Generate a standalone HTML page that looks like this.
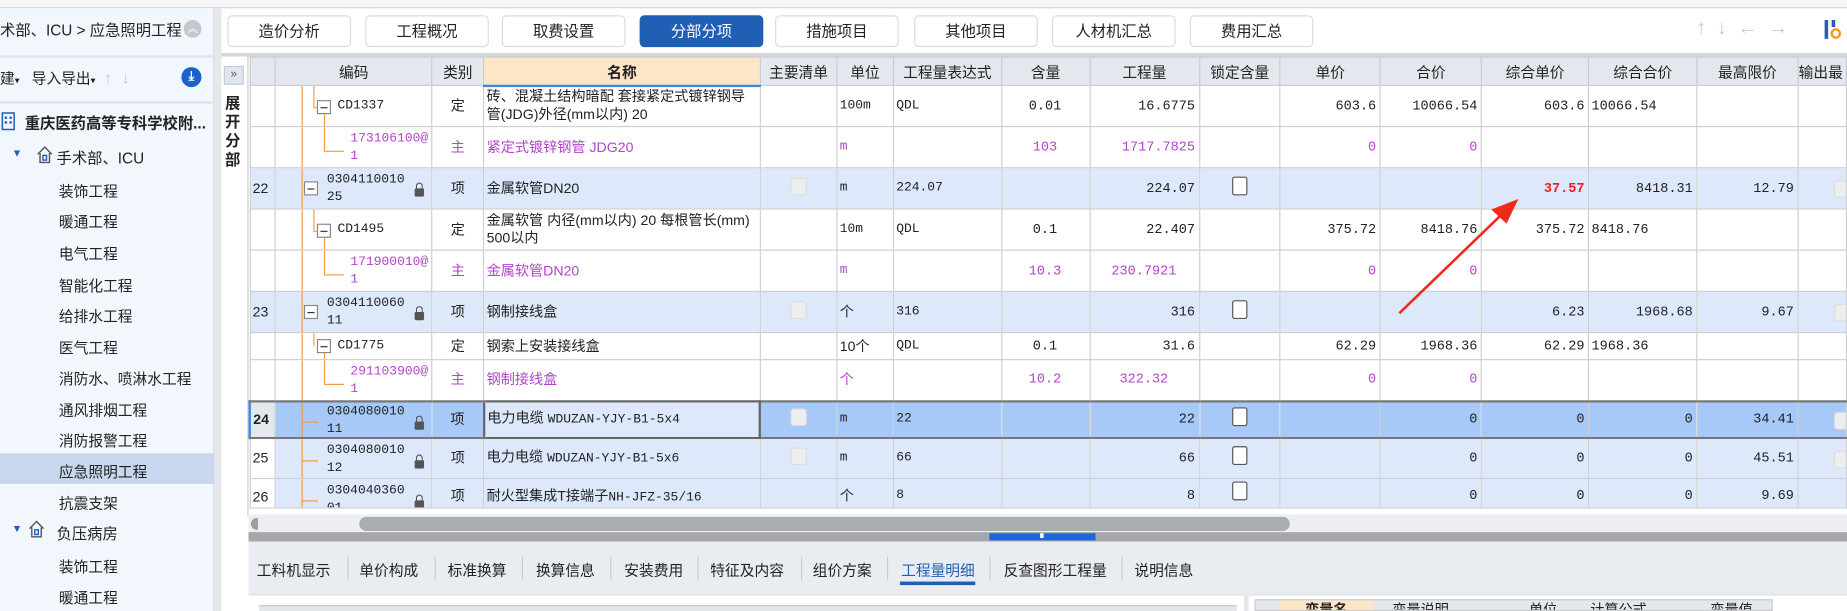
<!DOCTYPE html>
<html><head><meta charset="utf-8"><style>
*{box-sizing:border-box;margin:0;padding:0}
html,body{width:1847px;height:611px;overflow:hidden;background:#fff}
#w{position:absolute;left:0;top:0;width:1568px;height:519px;transform:scale(1.17793,1.17726);transform-origin:0 0;font-family:"Liberation Sans","Noto Sans CJK SC",sans-serif;font-size:12.5px;color:#222;background:#fff}
.a{position:absolute}
.btn{position:absolute;top:13px;height:27px;width:105px;border:1px solid #dcdcdc;border-radius:4px;background:#fff;text-align:center;line-height:25px;font-size:13px;color:#222}
.lt{position:absolute;left:50px;font-size:12.5px;color:#222}
table{border-collapse:collapse;table-layout:fixed;position:absolute;left:211px;top:48px}
td{border:1px solid #cfcfcf;height:35px;position:relative;font-size:12px;padding:0 2px;line-height:15px;overflow:hidden;white-space:nowrap;vertical-align:middle}
.s td{height:23px}
.t td{height:25px}
th{border:1px solid #c8ccd2;background:#e3e8ef;height:24px;font-weight:normal;font-size:12.5px}
.n{font-family:"Liberation Mono","Noto Sans CJK SC",monospace;font-size:11.5px;text-align:right;padding-right:3px}
.m{font-family:"Liberation Mono","Noto Sans CJK SC",monospace;font-size:11px}
.c{text-align:center}
.p{color:#b245c8}
.b{background:#dde9fb}
.sel td{background:#a6c9f7;border-top:2px solid #777;border-bottom:2px solid #777;height:31px}
.ol{position:absolute;background:#f39a3c}
.bx{position:absolute;width:12px;height:12px;border:1px solid #888;background:#fff}
.bx:after{content:"";position:absolute;left:2px;top:5px;width:6px;height:1px;background:#333}
.lk{position:absolute;width:8px;height:7px;background:#555;border-radius:1px}
.lk:before{content:"";position:absolute;left:1px;top:-5px;width:4px;height:5px;border:1px solid #555;border-bottom:none;border-radius:3px 3px 0 0}
.ck{display:inline-block;width:14px;height:15px;border:1px solid #ddd;border-radius:3px;background:#eee}
.cw{display:inline-block;width:13px;height:16px;border:1px solid #555;border-radius:2px;background:#fff}
.bt{position:absolute;top:474px;font-size:12.5px;color:#222}
.sp{position:absolute;top:473px;width:1px;height:20px;background:#ccc}
</style></head><body><div id="w">
<div class="a" style="left:0;top:0;width:1568px;height:7px;background:#f7f7f7;border-bottom:1px solid #d8d8d8"></div>
<div class="a" style="left:0;top:7px;width:182px;height:512px;background:#f2f7fd;border-right:1px solid #d6dbe2"></div>
<div class="a" style="left:0;top:15px;font-size:13px">术部、ICU &gt; 应急照明工程</div>
<div class="a" style="left:156px;top:17px;width:15px;height:15px;border-radius:50%;background:#c4c7cc;color:#fff;font-size:9px;text-align:center;line-height:15px">︽</div>
<div class="a" style="left:0;top:47px;width:182px;height:2px;background:#dfe3e8"></div>
<div class="a" style="left:0;top:56px;font-size:12.5px">建<span style="font-size:8px">▾</span> &nbsp;&nbsp;导入导出<span style="font-size:8px">▾</span> <span style="color:#c9c9c9;font-size:14px">&nbsp;↑ &nbsp;↓</span></div>
<div class="a" style="left:154px;top:57px;width:17px;height:17px;border-radius:50%;background:#1a63c8;color:#fff;font-size:11px;text-align:center;line-height:16px;font-weight:bold">⤓</div>
<div class="a" style="left:0;top:86px;width:182px;height:2px;background:#dfe3e8"></div>
<svg class="a" style="left:0;top:95px" width="14" height="16" viewBox="0 0 14 16"><rect x="2" y="1" width="10" height="14" fill="none" stroke="#1f5fb5" stroke-width="1.3"/><rect x="4" y="4" width="2" height="2" fill="#1f5fb5"/><rect x="8" y="4" width="2" height="2" fill="#1f5fb5"/><rect x="4" y="8" width="2" height="2" fill="#1f5fb5"/><rect x="8" y="8" width="2" height="2" fill="#1f5fb5"/></svg>
<div class="a" style="left:21px;top:94px;font-weight:bold;font-size:13px">重庆医药高等专科学校附...</div>
<div class="a" style="left:10px;top:125px;color:#1f5fb5;font-size:9px">▼</div>
<svg class="a" style="left:31px;top:124px" width="14" height="15" viewBox="0 0 14 15"><path d="M1 7 L7 1 L13 7 M3 6 V14 H11 V6" fill="none" stroke="#555" stroke-width="1.2"/><rect x="5.5" y="8" width="3" height="4" fill="none" stroke="#1f5fb5" stroke-width="1.2"/></svg>
<div class="a" style="left:48px;top:124px;font-size:13px">手术部、ICU</div>
<div class="lt" style="top:152px">装饰工程</div>
<div class="lt" style="top:178px">暖通工程</div>
<div class="lt" style="top:205px">电气工程</div>
<div class="lt" style="top:232px">智能化工程</div>
<div class="lt" style="top:258px">给排水工程</div>
<div class="lt" style="top:285px">医气工程</div>
<div class="lt" style="top:311px">消防水、喷淋水工程</div>
<div class="lt" style="top:338px">通风排烟工程</div>
<div class="lt" style="top:364px">消防报警工程</div>
<div class="a" style="left:0;top:385px;width:182px;height:26px;background:#c8d6ee"></div>
<div class="lt" style="top:390px">应急照明工程</div>
<div class="lt" style="top:417px">抗震支架</div>
<div class="a" style="left:10px;top:444px;color:#1f5fb5;font-size:9px">▼</div>
<svg class="a" style="left:24px;top:442px" width="14" height="15" viewBox="0 0 14 15"><path d="M1 7 L7 1 L13 7 M3 6 V14 H11 V6" fill="none" stroke="#555" stroke-width="1.2"/><rect x="5.5" y="8" width="3" height="4" fill="none" stroke="#1f5fb5" stroke-width="1.2"/></svg>
<div class="a" style="left:48px;top:443px;font-size:13px">负压病房</div>
<div class="lt" style="top:471px">装饰工程</div>
<div class="lt" style="top:497px">暖通工程</div>
<div class="a" style="left:182px;top:7px;width:6px;height:512px;background:#e6e8eb"></div>
<div class="a" style="left:188px;top:45px;width:1380px;height:3px;background:#d4d7dc"></div>
<div class="btn" style="left:193px">造价分析</div>
<div class="btn" style="left:310px">工程概况</div>
<div class="btn" style="left:426px">取费设置</div>
<div class="btn" style="left:543px;background:#1f5fb5;border-color:#1f5fb5;color:#fff">分部分项</div>
<div class="btn" style="left:658px">措施项目</div>
<div class="btn" style="left:776px">其他项目</div>
<div class="btn" style="left:893px">人材机汇总</div>
<div class="btn" style="left:1010px">费用汇总</div>
<div class="a" style="left:1440px;top:14px;color:#c6c9ce;font-size:17px;letter-spacing:9px">↑↓←→</div>
<div class="a" style="left:1549px;top:17px;width:3px;height:16px;background:#1f5fb5"></div>
<div class="a" style="left:1555px;top:17px;width:3px;height:6px;background:#1f5fb5"></div>
<div class="a" style="left:1554px;top:24px;width:9px;height:9px;border:2px solid #f39a1e;border-radius:50%"></div>
<div class="a" style="left:188px;top:48px;width:23px;height:390px;background:#fff;border-right:1px solid #ccc"></div>
<div class="a" style="left:190px;top:56px;width:17px;height:16px;background:#dfe6ee;border:1px solid #c3ccd6;font-size:10px;color:#555;text-align:center;line-height:14px">»</div>
<div class="a" style="left:191px;top:80px;width:15px;font-weight:bold;font-size:13px;line-height:16px">展开分部</div>
<table>
<colgroup><col style="width:22px"><col style="width:133px"><col style="width:44px"><col style="width:235px"><col style="width:65px"><col style="width:48px"><col style="width:92px"><col style="width:75px"><col style="width:93px"><col style="width:69px"><col style="width:85px"><col style="width:86px"><col style="width:91px"><col style="width:92px"><col style="width:86px"><col style="width:41px"></colgroup>
<tr><th></th><th>编码</th><th>类别</th><th style="background:#fde6c6;border-bottom:2px solid #3a86e0;font-weight:bold">名称</th><th>主要清单</th><th>单位</th><th>工程量表达式</th><th>含量</th><th>工程量</th><th>锁定含量</th><th>单价</th><th>合价</th><th>综合单价</th><th>综合合价</th><th>最高限价</th><th style="text-align:left">输出最</th></tr>
<tr><td></td><td><div class="ol" style="left:22px;top:0;width:1px;height:36px"></div><div class="ol" style="left:32px;top:0;width:1px;height:18px"></div><div class="ol" style="left:32px;top:18px;width:4px;height:1px"></div><div class="bx" style="left:35px;top:12px"></div><div class="ol" style="left:41px;top:24px;width:1px;height:12px"></div><span class="m" style="position:absolute;left:52px;top:10px">CD1337</span></td><td class="c">定</td><td style="white-space:normal;line-height:15px">砖、混凝土结构暗配 套接紧定式镀锌钢导管(JDG)外径(mm以内) 20</td><td></td><td class="m">100m</td><td class="m">QDL</td><td class="n" style="text-align:center">0.01</td><td class="n">16.6775</td><td></td><td class="n">603.6</td><td class="n">10066.54</td><td class="n">603.6</td><td class="n" style="text-align:left">10066.54</td><td></td><td></td></tr>
<tr><td></td><td><div class="ol" style="left:22px;top:0;width:1px;height:35px"></div><div class="ol" style="left:41px;top:0;width:1px;height:20px"></div><div class="ol" style="left:41px;top:20px;width:17px;height:1px"></div><span class="m p" style="position:absolute;left:63px;top:3px;line-height:15px">173106100@<br>1</span></td><td class="c p">主</td><td class="p">紧定式镀锌钢管 JDG20</td><td></td><td class="m p">m</td><td></td><td class="n p" style="text-align:center">103</td><td class="n p">1717.7825</td><td></td><td class="n p">0</td><td class="n p">0</td><td></td><td></td><td></td><td></td></tr>
<tr class="b"><td class="b">22</td><td class="b"><div class="ol" style="left:22px;top:0;width:1px;height:35px"></div><div class="bx" style="left:24px;top:11px"></div><span class="m" style="position:absolute;left:43px;top:3px">0304110010<br>25</span><div class="lk" style="left:118px;top:17px"></div></td><td class="c b">项</td><td class="b">金属软管DN20</td><td class="b c"><span class="ck"></span></td><td class="b m">m</td><td class="b m">224.07</td><td class="b"></td><td class="b n">224.07</td><td class="b c"><span class="cw"></span></td><td class="b"></td><td class="b"></td><td class="b n" style="color:#f01c1c;font-weight:bold">37.57</td><td class="b n">8418.31</td><td class="b n">12.79</td><td class="b"><span class="ck" style="position:absolute;right:-4px;top:10px"></span></td></tr>
<tr><td></td><td><div class="ol" style="left:22px;top:0;width:1px;height:36px"></div><div class="ol" style="left:32px;top:0;width:1px;height:18px"></div><div class="ol" style="left:32px;top:18px;width:4px;height:1px"></div><div class="bx" style="left:35px;top:12px"></div><div class="ol" style="left:41px;top:24px;width:1px;height:12px"></div><span class="m" style="position:absolute;left:52px;top:10px">CD1495</span></td><td class="c">定</td><td style="white-space:normal">金属软管 内径(mm以内) 20 每根管长(mm) 500以内</td><td></td><td class="m">10m</td><td class="m">QDL</td><td class="n" style="text-align:center">0.1</td><td class="n">22.407</td><td></td><td class="n">375.72</td><td class="n">8418.76</td><td class="n">375.72</td><td class="n" style="text-align:left">8418.76</td><td></td><td></td></tr>
<tr><td></td><td><div class="ol" style="left:22px;top:0;width:1px;height:36px"></div><div class="ol" style="left:41px;top:0;width:1px;height:20px"></div><div class="ol" style="left:41px;top:20px;width:17px;height:1px"></div><span class="m p" style="position:absolute;left:63px;top:3px">171900010@<br>1</span></td><td class="c p">主</td><td class="p">金属软管DN20</td><td></td><td class="m p">m</td><td></td><td class="n p" style="text-align:center">10.3</td><td class="n p" style="text-align:center">230.7921</td><td></td><td class="n p">0</td><td class="n p">0</td><td></td><td></td><td></td><td></td></tr>
<tr class="b"><td class="b">23</td><td class="b"><div class="ol" style="left:22px;top:0;width:1px;height:36px"></div><div class="bx" style="left:24px;top:11px"></div><span class="m" style="position:absolute;left:43px;top:3px">0304110060<br>11</span><div class="lk" style="left:118px;top:17px"></div></td><td class="c b">项</td><td class="b">钢制接线盒</td><td class="b c"><span class="ck"></span></td><td class="b">个</td><td class="b m">316</td><td class="b"></td><td class="b n">316</td><td class="b c"><span class="cw"></span></td><td class="b"></td><td class="b"></td><td class="b n">6.23</td><td class="b n">1968.68</td><td class="b n">9.67</td><td class="b"><span class="ck" style="position:absolute;right:-4px;top:10px"></span></td></tr>
<tr class="s"><td></td><td><div class="ol" style="left:22px;top:0;width:1px;height:23px"></div><div class="ol" style="left:32px;top:0;width:1px;height:11px"></div><div class="bx" style="left:35px;top:5px"></div><div class="ol" style="left:41px;top:17px;width:1px;height:6px"></div><span class="m" style="position:absolute;left:52px;top:4px">CD1775</span></td><td class="c">定</td><td>钢索上安装接线盒</td><td></td><td>10个</td><td class="m">QDL</td><td class="n" style="text-align:center">0.1</td><td class="n">31.6</td><td></td><td class="n">62.29</td><td class="n">1968.36</td><td class="n">62.29</td><td class="n" style="text-align:left">1968.36</td><td></td><td></td></tr>
<tr><td></td><td><div class="ol" style="left:22px;top:0;width:1px;height:36px"></div><div class="ol" style="left:41px;top:0;width:1px;height:20px"></div><div class="ol" style="left:41px;top:20px;width:17px;height:1px"></div><span class="m p" style="position:absolute;left:63px;top:3px">291103900@<br>1</span></td><td class="c p">主</td><td class="p">钢制接线盒</td><td></td><td class="p">个</td><td></td><td class="n p" style="text-align:center">10.2</td><td class="n p" style="text-align:center">322.32</td><td></td><td class="n p">0</td><td class="n p">0</td><td></td><td></td><td></td><td></td></tr>
<tr class="sel"><td style="background:#e3e8ef;font-weight:bold;border-left:2px solid #3a86e0">24</td><td><div class="ol" style="left:22px;top:0;width:1px;height:33px"></div><div class="ol" style="left:22px;top:16px;width:14px;height:1px"></div><span class="m" style="position:absolute;left:43px;top:1px">0304080010<br>11</span><div class="lk" style="left:118px;top:16px"></div></td><td class="c">项</td><td style="background:#dde9fb;border:2px solid #666">电力电缆 <span class="m">WDUZAN-YJY-B1-5x4</span></td><td class="c"><span class="ck"></span></td><td class="m">m</td><td class="m">22</td><td></td><td class="n">22</td><td class="c"><span class="cw"></span></td><td></td><td class="n">0</td><td class="n">0</td><td class="n">0</td><td class="n">34.41</td><td><span class="ck" style="position:absolute;right:-4px;top:8px"></span></td></tr>
<tr class="b"><td style="background:#fff">25</td><td class="b"><div class="ol" style="left:22px;top:0;width:1px;height:35px"></div><div class="ol" style="left:22px;top:18px;width:14px;height:1px"></div><span class="m" style="position:absolute;left:43px;top:3px">0304080010<br>12</span><div class="lk" style="left:118px;top:18px"></div></td><td class="c b">项</td><td class="b">电力电缆 <span class="m">WDUZAN-YJY-B1-5x6</span></td><td class="b c"><span class="ck"></span></td><td class="b m">m</td><td class="b m">66</td><td class="b"></td><td class="b n">66</td><td class="b c"><span class="cw"></span></td><td class="b"></td><td class="b n">0</td><td class="b n">0</td><td class="b n">0</td><td class="b n">45.51</td><td class="b"><span class="ck" style="position:absolute;right:-4px;top:10px"></span></td></tr>
<tr class="b t"><td style="background:#fff;vertical-align:top;padding-top:8px">26</td><td class="b"><div class="ol" style="left:22px;top:0;width:1px;height:25px"></div><div class="ol" style="left:22px;top:18px;width:14px;height:1px"></div><span class="m" style="position:absolute;left:43px;top:3px">0304040360<br>01</span><div class="lk" style="left:118px;top:18px"></div></td><td class="c b" style="vertical-align:top;padding-top:7px">项</td><td class="b" style="vertical-align:top;padding-top:7px">耐火型集成T接端子<span class="m">NH-JFZ-35/16</span></td><td class="b"></td><td class="b" style="vertical-align:top;padding-top:7px">个</td><td class="b m" style="vertical-align:top;padding-top:7px">8</td><td class="b"></td><td class="b n" style="vertical-align:top;padding-top:7px">8</td><td class="b c"><span class="cw"></span></td><td class="b"></td><td class="b n" style="vertical-align:top;padding-top:7px">0</td><td class="b n" style="vertical-align:top;padding-top:7px">0</td><td class="b n" style="vertical-align:top;padding-top:7px">0</td><td class="b n" style="vertical-align:top;padding-top:7px">9.69</td><td class="b"></td></tr>
</table>
<svg class="a" style="left:0;top:0" width="1568" height="519"><path d="M1188 266 L1274 183" stroke="#f02a1a" stroke-width="2.2" fill="none"/><path d="M1289 169 L1266 178 L1279 190 Z" fill="#f02a1a"/></svg>
<div class="a" style="left:211px;top:437px;width:1357px;height:15px;background:#eceef1"></div>
<div class="a" style="left:213px;top:440px;width:6px;height:10px;border-radius:5px 0 0 5px;background:#9a9da2"></div>
<div class="a" style="left:305px;top:439px;width:790px;height:12px;border-radius:6px;background:#a9acb1"></div>
<div class="a" style="left:211px;top:452px;width:1357px;height:8px;background:#a5a7ab"></div>
<div class="a" style="left:840px;top:453px;width:90px;height:6px;background:#1f66d6"></div>
<div class="a" style="left:883px;top:453px;width:3px;height:4px;background:#fff"></div>
<div class="a" style="left:211px;top:460px;width:1357px;height:44px;background:#e9ecf0"></div>
<div class="bt" style="left:218px">工料机显示</div><div class="sp" style="left:295px"></div>
<div class="bt" style="left:305px">单价构成</div><div class="sp" style="left:369px"></div>
<div class="bt" style="left:380px">标准换算</div><div class="sp" style="left:443px"></div>
<div class="bt" style="left:455px">换算信息</div><div class="sp" style="left:518px"></div>
<div class="bt" style="left:530px">安装费用</div><div class="sp" style="left:592px"></div>
<div class="bt" style="left:603px">特征及内容</div><div class="sp" style="left:680px"></div>
<div class="bt" style="left:690px">组价方案</div><div class="sp" style="left:753px"></div>
<div class="bt" style="left:765px;color:#1f5fb5">工程量明细</div>
<div class="a" style="left:764px;top:494px;width:64px;height:3px;background:#1f5fb5"></div><div class="sp" style="left:840px"></div>
<div class="bt" style="left:852px">反查图形工程量</div><div class="sp" style="left:952px"></div>
<div class="bt" style="left:963px">说明信息</div>
<div class="a" style="left:211px;top:504px;width:1357px;height:15px;background:#e3e6ea"></div>
<div class="a" style="left:211px;top:506px;width:845px;height:13px;background:#fff"></div>
<div class="a" style="left:220px;top:514px;width:830px;height:5px;background:#e3e6ea;border-top:1px solid #ccc"></div>
<div class="a" style="left:1060px;top:506px;width:508px;height:13px;background:#fff"></div>
<div class="a" style="left:1065px;top:509px;width:440px;height:10px;background:#e3e8ef;border:1px solid #ccc;overflow:hidden;font-size:12px;line-height:16px">
<span style="position:absolute;left:20px;width:80px;top:0;height:12px;background:#fde6c6;font-weight:bold;text-align:center">变量名</span>
<span style="position:absolute;left:116px;top:0">变量说明</span><span style="position:absolute;left:232px;top:0">单位</span><span style="position:absolute;left:284px;top:0">计算公式</span><span style="position:absolute;left:386px;top:0">变量值</span></div>
</div></body></html>
